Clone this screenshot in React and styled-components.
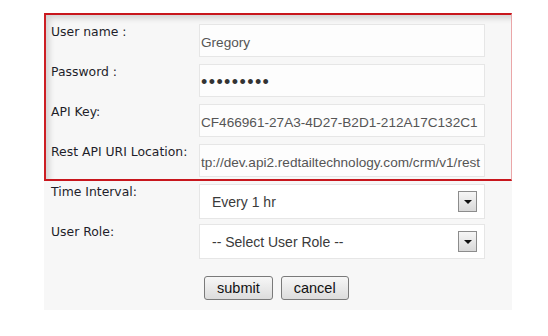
import React from 'react';
import styled, { createGlobalStyle } from 'styled-components';

const GlobalStyle = createGlobalStyle`
  body {
    margin: 0;
    background: #fff;
  }
`;

const Panel = styled.form`
  width: 468px;
  height: 297px;
  margin: 13px 0 0 44px;
  background: #f7f7f7;
  box-sizing: border-box;
`;

const Highlight = styled.div`
  display: flex;
  flex-direction: column;
  gap: 7px;
  padding: 9px 0 2px 5px;
  border-top: 2px solid #c8161d;
  border-left: 2px solid #cc1f24;
  border-bottom: 2px solid #c8161d;
  border-right: 1px solid #eaa6a8;
  box-shadow: inset 6px 6px 6px -3px rgba(0, 0, 0, 0.16);
`;

const Plain = styled.div`
  display: flex;
  flex-direction: column;
  gap: 5px;
  padding: 3px 0 0 7px;
`;

const Row = styled.div`
  display: grid;
  grid-template-columns: 148px 286px;
  height: ${(p) => p.$h}px;
`;

const Label = styled.label`
  padding-top: 1px;
  font-family: 'DejaVu Sans', sans-serif;
  font-size: 12.4px;
  line-height: 14px;
  color: #1e1e2a;
`;

const Field = styled.input`
  box-sizing: border-box;
  width: 286px;
  height: 33px;
  padding: 3px 1px 0;
  border: 1px solid #e6e6e6;
  background: #fdfdfd;
  font-family: 'Liberation Sans', Arial, sans-serif;
  font-size: 13.6px;
  color: #555;
  outline: none;
`;

const Secret = styled(Field)`
  color: #333;
  font-size: 18px;
  letter-spacing: 1.4px;
`;

const SelectBox = styled.div`
  box-sizing: border-box;
  display: flex;
  align-items: center;
  width: 286px;
  height: 35px;
  padding: 0 7px 0 12px;
  border: 1px solid #e6e6e6;
  background: #fff;
`;

const SelectText = styled.select`
  flex: 1;
  appearance: none;
  border: none;
  background: transparent;
  padding: 0;
  font-family: 'Liberation Sans', Arial, sans-serif;
  font-size: 14px;
  color: #3a3a3a;
  outline: none;
`;

const ArrowBox = styled.span`
  box-sizing: border-box;
  display: flex;
  align-items: center;
  justify-content: center;
  width: 19px;
  height: 21px;
  border: 1px solid #8c8c8c;
  background: linear-gradient(#f6f6f6, #d9d9d9);

  &::after {
    content: '';
    border-left: 4px solid transparent;
    border-right: 4px solid transparent;
    border-top: 4px solid #111;
  }
`;

const Actions = styled.div`
  display: flex;
  gap: 8px;
  margin: 12px 0 0 153px;
`;

const Button = styled.button`
  height: 24px;
  padding: 0 12px;
  border: 1px solid #7a7a7a;
  border-radius: 3px;
  background: linear-gradient(#f7f7f7, #dcdcdc);
  font-family: 'Liberation Sans', Arial, sans-serif;
  font-size: 14.5px;
  color: #111;
`;

const Select = ({ value, options }) => (
  <SelectBox>
    <SelectText defaultValue={value}>
      {options.map((o) => (
        <option key={o}>{o}</option>
      ))}
    </SelectText>
    <ArrowBox />
  </SelectBox>
);

const App = () => {
  const fields = [
    { id: 'user', label: 'User name :', value: 'Gregory' },
    { id: 'pass', label: 'Password :', value: 'secret123', secret: true },
    { id: 'key', label: 'API Key:', value: 'CF466961-27A3-4D27-B2D1-212A17C132C1' },
    { id: 'uri', label: 'Rest API URI Location:', value: 'tp://dev.api2.redtailtechnology.com/crm/v1/rest' },
  ];

  return (
    <>
      <GlobalStyle />
      <Panel onSubmit={(e) => e.preventDefault()}>
        <Highlight>
          {fields.map((f) => (
            <Row key={f.id} $h={33}>
              <Label htmlFor={f.id}>{f.label}</Label>
              {f.secret ? (
                <Secret id={f.id} type="password" defaultValue={f.value} />
              ) : (
                <Field id={f.id} type="text" defaultValue={f.value} />
              )}
            </Row>
          ))}
        </Highlight>
        <Plain>
          <Row $h={35}>
            <Label>Time Interval:</Label>
            <Select value="Every 1 hr" options={['Every 1 hr', 'Every 2 hr', 'Every 6 hr']} />
          </Row>
          <Row $h={35}>
            <Label>User Role:</Label>
            <Select value="-- Select User Role --" options={['-- Select User Role --', 'Admin', 'User']} />
          </Row>
          <Actions>
            <Button type="submit">submit</Button>
            <Button type="button">cancel</Button>
          </Actions>
        </Plain>
      </Panel>
    </>
  );
};

export default App;
